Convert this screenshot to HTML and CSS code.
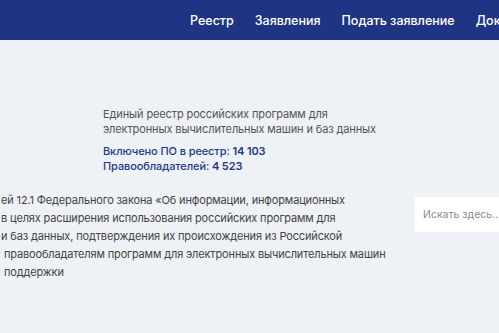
FILE: index.html
```html
<!DOCTYPE html>
<html lang="ru">
<head>
  <meta charset="UTF-8">
  <meta name="viewport" content="width=device-width, initial-scale=1.0">
  <title>Реестр российского ПО</title>
  <link rel="stylesheet" href="styles.css">
</head>
<body>
  <header class="shapka">
    <nav class="menu">
      <a href="#">Реестр</a>
      <a href="#">Заявления</a>
      <a href="#">Подать заявление</a>
      <a href="#">Док</a>
    </nav>
  </header>

  <main class="glavnaya">
    <div class="intro">
      <p class="intro-tekst">Единый реестр российских программ для<br>электронных вычислительных машин и баз данных</p>
      <p class="stat">Включено ПО в реестр: <b>14 103</b><br>Правообладателей: <b>4 523</b></p>
    </div>

    <div class="ryad">
      <p class="opisanie">ей 12.1 Федерального закона «Об информации, информационных<br>в целях расширения использования российских программ для<br>и баз данных, подтверждения их происхождения из Российской<br>&nbsp;правообладателям программ для электронных вычислительных машин<br>&nbsp;поддержки</p>
      <div class="poisk">
        <input type="text" placeholder="Искать здесь...">
      </div>
    </div>
  </main>
</body>
</html>
```

FILE: styles.css
```css
body {
  margin: 0;
  background: #eef1f5;
  font-family: Inter, "Noto Sans", sans-serif;
  color: #4a4a4a;
  overflow: hidden;
}
.shapka {
  height: 40px;
  background: #1f3482;
  overflow: hidden;
}
.menu {
  display: flex;
  gap: 21px;
  padding-left: 190px;
  height: 40px;
  align-items: center;
  white-space: nowrap;
}
.menu a {
  color: #fff;
  text-decoration: none;
  font-size: 12.5px;
  font-weight: 500;
}
.intro {
  margin: 67px 0 0 103px;
}
.intro-tekst {
  margin: 0;
  font-size: 11px;
  line-height: 15px;
  letter-spacing: -0.12px;
  color: #555;
}
.stat {
  margin: 7px 0 0;
  font-size: 11px;
  line-height: 15px;
  letter-spacing: -0.1px;
  color: #23398a;
  font-weight: 500;
}
.stat b {
  font-weight: 600;
}
.ryad {
  display: flex;
  justify-content: space-between;
  margin-top: 17px;
}
.opisanie {
  margin: 0;
  padding-left: 1px;
  font-size: 11px;
  line-height: 18px;
  letter-spacing: -0.15px;
  color: #444;
  white-space: nowrap;
}
.poisk {
  margin-top: 6px;
  width: 84px;
  overflow: hidden;
}
.poisk input {
  box-sizing: border-box;
  width: 100px;
  height: 35px;
  border: none;
  background: #fff;
  padding: 0 8px;
  font-family: inherit;
  font-size: 10.5px;
  color: #333;
  outline: none;
}
.poisk input::placeholder {
  color: #8a8a8a;
}
```
